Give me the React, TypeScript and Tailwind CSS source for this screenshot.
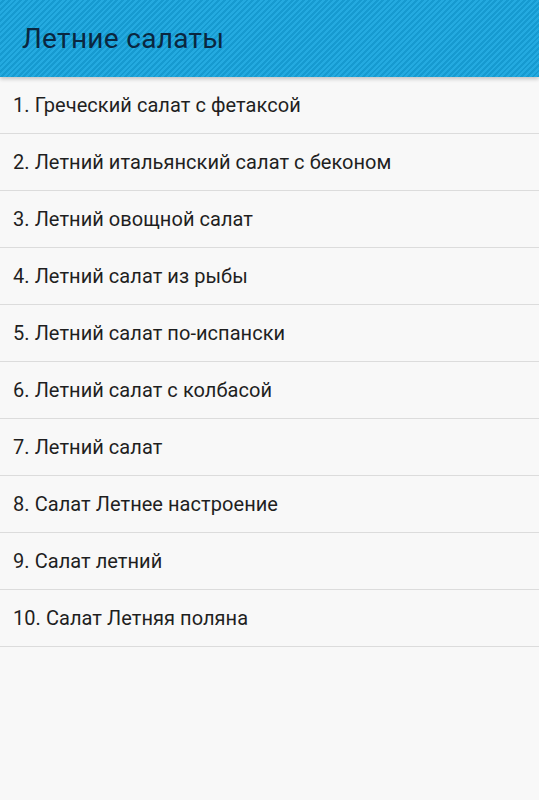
const salads = [
  "Греческий салат с фетаксой",
  "Летний итальянский салат с беконом",
  "Летний овощной салат",
  "Летний салат из рыбы",
  "Летний салат по-испански",
  "Летний салат с колбасой",
  "Летний салат",
  "Салат Летнее настроение",
  "Салат летний",
  "Салат Летняя поляна",
]

export default function App() {
  return (
    <div className="w-[539px] h-[800px] bg-[#f8f8f8] font-['Roboto',sans-serif] overflow-hidden">
      <header className="relative z-10 h-[77px] flex items-center pl-[22px] bg-[#1ea4da] bg-[repeating-linear-gradient(135deg,#24aae0_0px,#24aae0_2px,#169ad0_2px,#169ad0_4px)] shadow-[0_2px_4px_rgba(0,0,0,0.22)]">
        <h1 className="text-[28px] tracking-[0.3px] text-[#0a2740] leading-none">Летние салаты</h1>
      </header>
      <ul>
        {salads.map((name, i) => (
          <li
            key={i}
            className="h-[57px] flex items-center pl-[13px] border-b-[1.5px] border-[#dcdcdc] text-[20px] tracking-[0.05px] text-[#1f1f1f]"
          >
            {i + 1}. {name}
          </li>
        ))}
      </ul>
    </div>
  )
}
